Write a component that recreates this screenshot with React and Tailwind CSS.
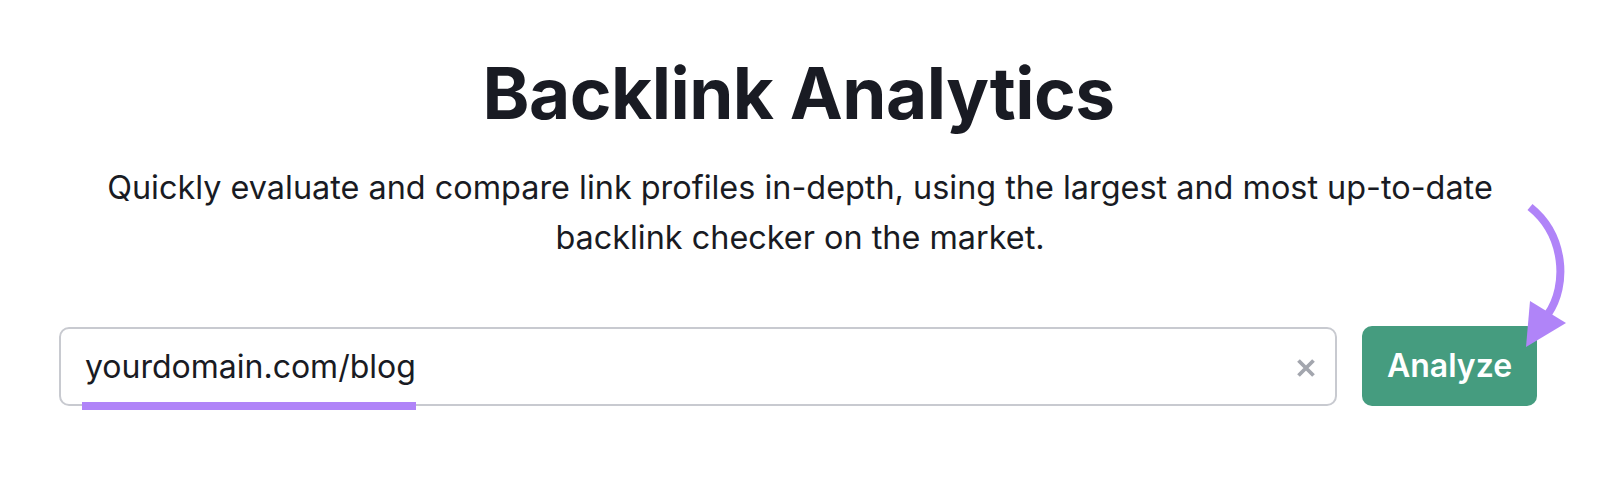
import React from "react";

export default function App() {
  return (
    <div className="relative w-[1600px] h-[487px] bg-white overflow-hidden" style={{ fontFamily: "Inter, 'Liberation Sans', sans-serif" }}>
      <div className="flex flex-col items-center pt-[58px]">
        <h1 className="text-[71px] leading-none font-bold text-[#191b23] tracking-[-0.5px] ml-[-3px]">Backlink Analytics</h1>
        <p className="mt-[34px] text-[32.4px] leading-[50px] text-[#191b23] text-center">
          Quickly evaluate and compare link profiles in-depth, using the largest and most up-to-date
          <br />
          backlink checker on the market.
        </p>
      </div>
      <div className="flex ml-[59px] w-[1478px] mt-[64px] gap-[25px]">
        <div className="relative flex-1 h-[79px] border-2 border-[#c8cad0] rounded-[10px] flex items-center pl-[24px] pr-[19px]">
          <span className="text-[32px] text-[#191b23] flex-1">yourdomain.com/blog</span>
          <svg width="20" height="20" viewBox="0 0 20 20" className="mt-[2px]">
            <path d="M2.5 2.5 L17.5 17.5 M17.5 2.5 L2.5 17.5" stroke="#a3a6ae" strokeWidth="3.8" strokeLinecap="butt" />
          </svg>
          <div className="absolute left-[21px] bottom-[-6px] w-[334px] h-[8px] bg-[#b084f8]" />
        </div>
        <button className="w-[175px] h-[80px] -mt-[1px] rounded-[10px] bg-[#459c7f] text-white text-[32px] font-semibold">Analyze</button>
      </div>
      <svg className="absolute left-0 top-0" width="1600" height="487" viewBox="0 0 1600 487" fill="none">
        <path d="M1530 207 C1565 235 1568 285 1548 314" stroke="#b084f8" strokeWidth="8" fill="none" />
        <polygon points="1530,301 1566,323 1526,347" fill="#b084f8" />
      </svg>
    </div>
  );
}
